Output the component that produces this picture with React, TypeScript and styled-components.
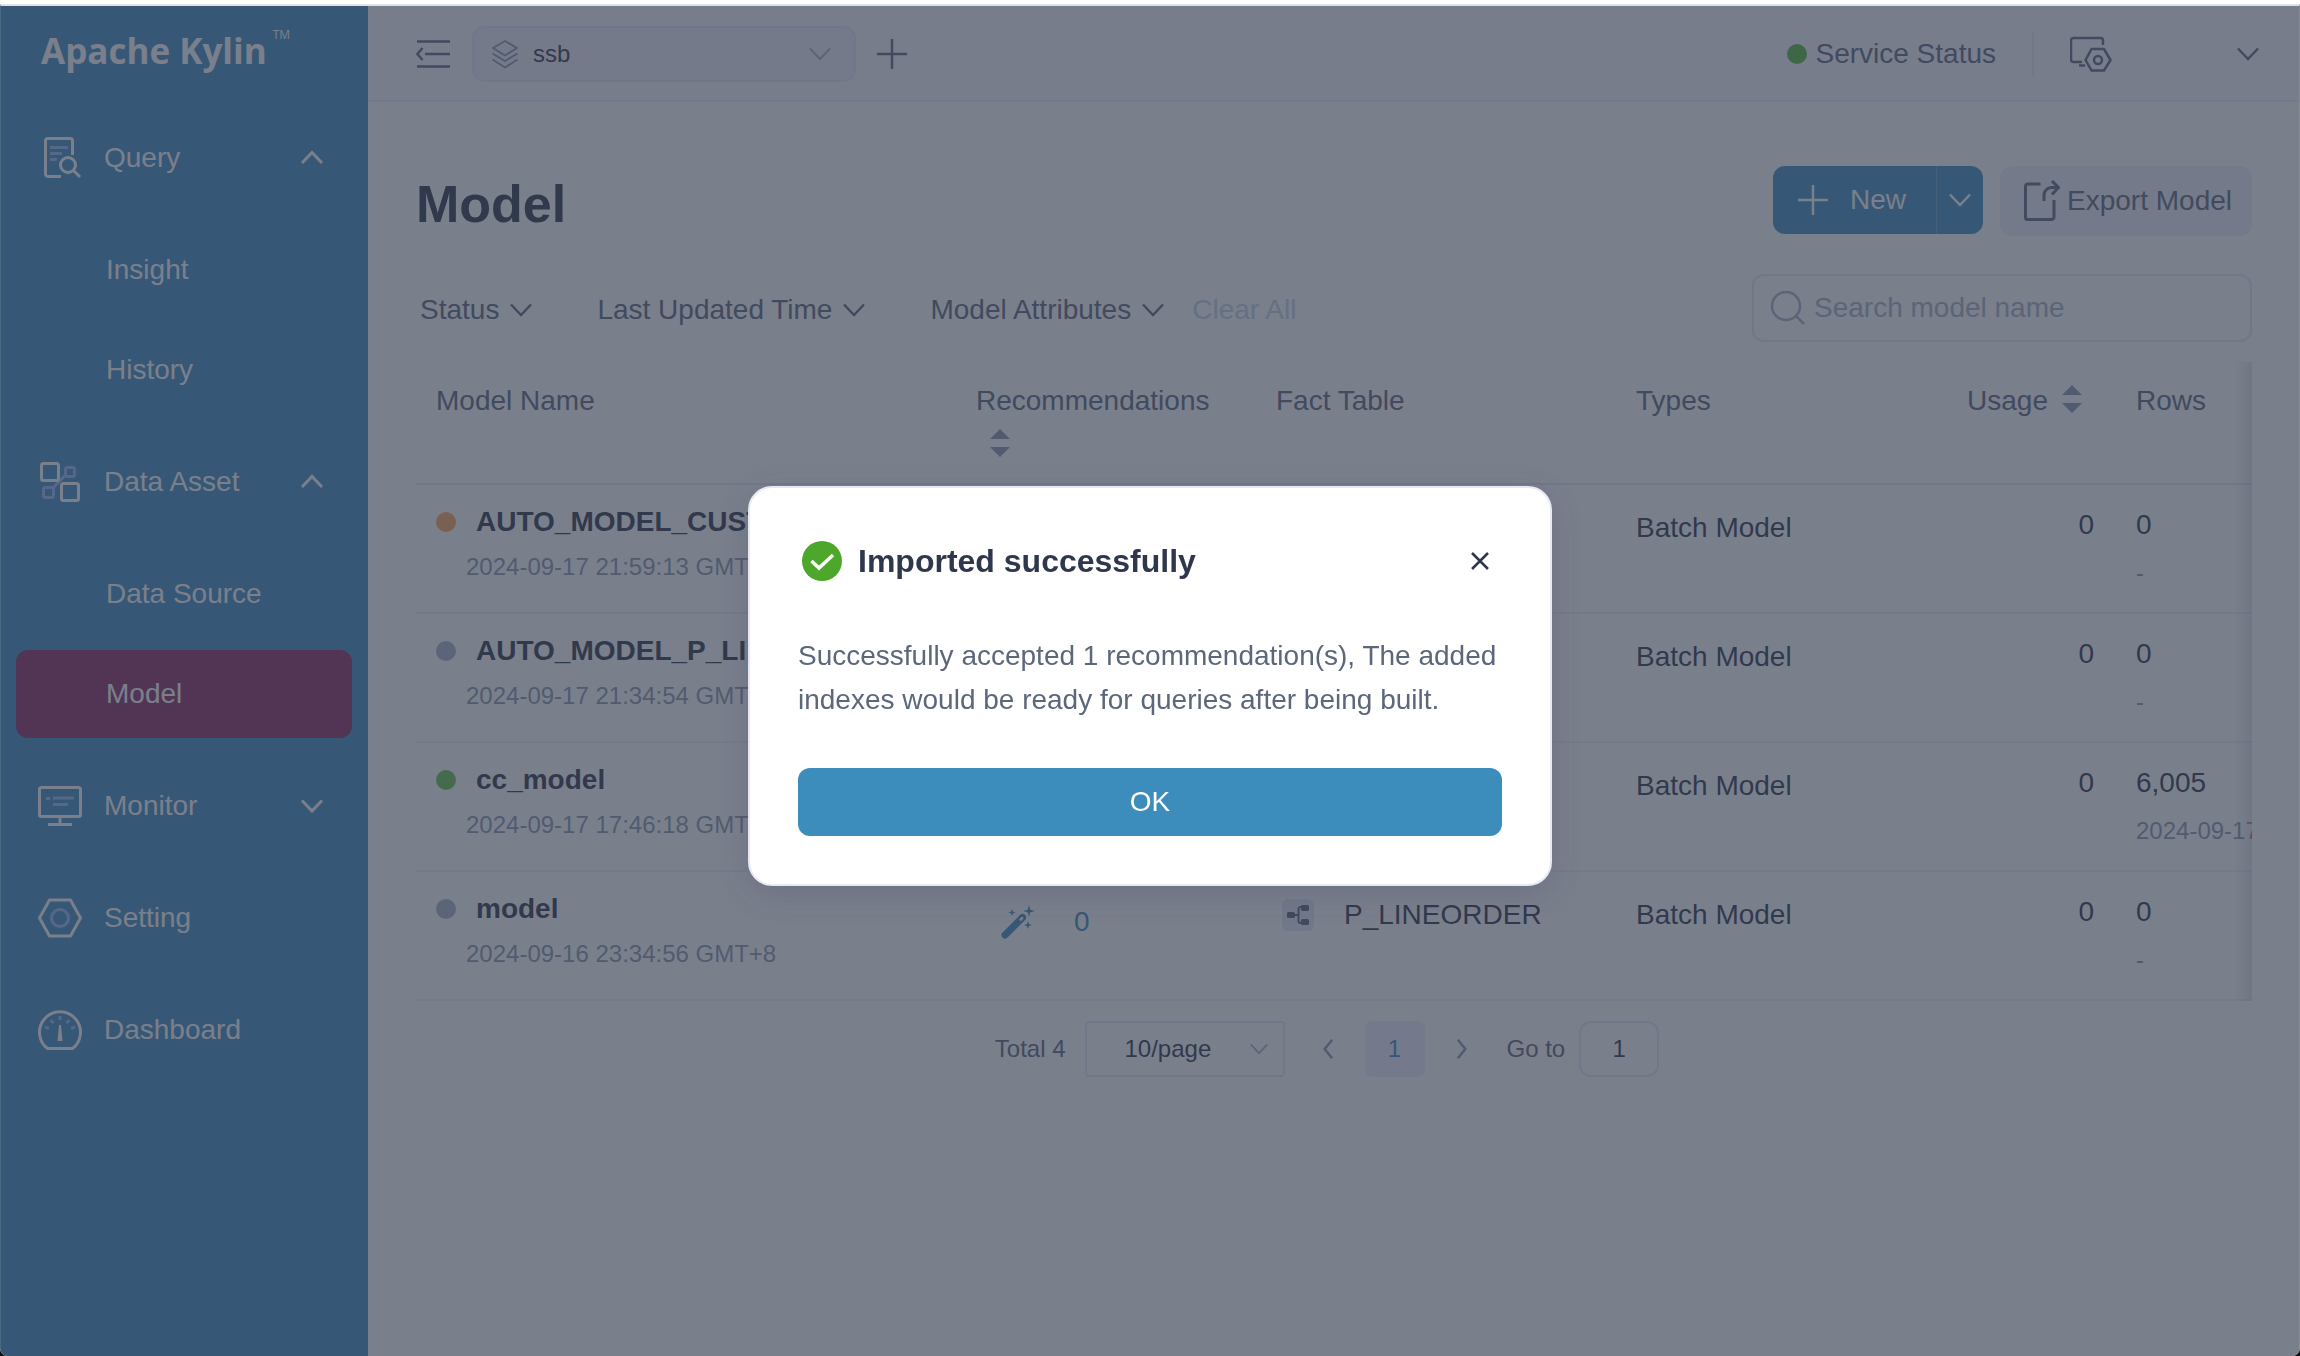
import React, { ReactNode } from 'react';
import styled, { createGlobalStyle } from 'styled-components';

const color = {
  brand: '#3c8dbc',
  active: '#8e2a5f',
  ink: '#2f374c',
  text: '#5c677b',
  muted: '#8b99ae',
  faint: '#a5b2c5',
  line: '#eff1f9',
  border: '#e6e9f7',
  soft: '#edf0f8',
};

const Global = createGlobalStyle`
  *, *::before, *::after { box-sizing: border-box; }
  html { background: #111; }
  body { margin: 0; font-family: "Liberation Sans", Arial, Helvetica, sans-serif; font-size: 28px; line-height: 32px; color: ${color.ink}; }
  button, input, select { font: inherit; color: inherit; margin: 0; padding: 0; border: 0; background: none; outline: 0; }
  button { cursor: pointer; display: inline-flex; align-items: center; }
  a { color: inherit; text-decoration: none; }
  h1, h2, p { margin: 0; }
  svg { display: block; flex: none; }
`;

/* ---------- icons ---------- */

const Svg = styled.svg.attrs({ fill: 'none', 'aria-hidden': true })<{ $c?: string }>`
  color: ${p => p.$c || 'inherit'};
  stroke: currentColor;
`;

const pale = '#94bcf5';

const Chevron = ({ dir = 'down', w = 24, sw = 3, c }: { dir?: string; w?: number; sw?: number; c?: string }) => {
  const d: Record<string, string> = {
    down: 'M2 6.5 12 17 22 6.5',
    up: 'M2 17 12 6.5 22 17',
    left: 'M17 1 8 12 17 23',
    right: 'M7 1 16 12 7 23',
  };
  return (
    <Svg $c={c} width={w} height={w} viewBox="0 0 24 24" strokeWidth={sw}>
      <path d={d[dir]} />
    </Svg>
  );
};

const QueryIcon = () => (
  <Svg width="44" height="44" viewBox="-2 0 44 44" strokeWidth="3">
    <path d="M21 40.500H8a2.500 2.500 0 0 1-2.500-2.500V4.500A2.500 2.500 0 0 1 8 2.500h22a2.500 2.500 0 0 1 2.500 2.500v14" />
    <path d="M10 11.500h18M10 17.500h12M10 23.500h7" stroke={pale} />
    <circle cx="28" cy="29" r="7.500" />
    <path d="m33.500 34.500 6.500 6.500" />
  </Svg>
);

const AssetIcon = () => (
  <Svg width="44" height="44" viewBox="0 0 44 44" strokeWidth="3">
    <g stroke={pale}>
      <rect x="27.500" y="7.500" width="9" height="9" rx="2" />
      <rect x="5.500" y="27.500" width="10" height="10" rx="2" />
      <path d="m15 28 12-12.500" />
    </g>
    <rect x="3.500" y="3.500" width="17" height="17" rx="2" />
    <rect x="23.500" y="23.500" width="17" height="17" rx="2" />
  </Svg>
);

const MonitorIcon = () => (
  <Svg width="44" height="44" viewBox="0 0 44 44" strokeWidth="3">
    <rect x="1.500" y="3.500" width="41" height="29" rx="2" />
    <path d="M22 33v6M10 40.500h24" />
    <path d="M8 14.500h4M15 14h21M15 20.500h15" stroke={pale} />
  </Svg>
);

const SettingIcon = () => (
  <Svg width="44" height="44" viewBox="0 0 44 44" strokeWidth="3">
    <path d="M11.500 4h21L42.500 22l-10 18h-21L1.500 22z" strokeLinejoin="round" />
    <circle cx="22" cy="22" r="8.500" stroke={pale} />
  </Svg>
);

const DashboardIcon = () => (
  <Svg width="44" height="44" viewBox="0 0 44 44" strokeWidth="3">
    <path d="M9.500 40.500a20.500 20.500 0 1 1 25 0z" strokeLinejoin="round" />
    <path d="M21 17h2l1.500 16h-5z" fill="currentColor" stroke="none" />
    <path d="M22 8v4M12.500 12l3 3M31.500 12l-3 3M7 19l4 1.500M37 19l-4 1.500" stroke={pale} />
  </Svg>
);

const CollapseIcon = () => (
  <Svg $c={color.text} width="34" height="30" viewBox="0 0 34 30" strokeWidth="2.500">
    <path d="M1 2.500h33M9 15h25M1 27.500h33M6.500 9 1.500 15l5 6" />
  </Svg>
);

const LayersIcon = () => (
  <Svg $c={color.muted} width="28" height="30" viewBox="0 0 28 30" strokeWidth="2" strokeLinejoin="round">
    <path d="M14 2 26 9 14 16.500 2 9zM1.500 14.500 14 22l12.500-7.500M1.500 20.500 14 28.500l12.500-8" />
  </Svg>
);

const PlusIcon = ({ c, sw = 2.5 }: { c?: string; sw?: number }) => (
  <Svg $c={c} width="32" height="32" viewBox="0 0 32 32" strokeWidth={sw}>
    <path d="M16 1v30M1 16h30" />
  </Svg>
);

const AdminIcon = () => (
  <Svg $c={color.text} width="42" height="36" viewBox="0 0 42 36" strokeWidth="2.500" strokeLinejoin="round">
    <path d="M33 9V4.500A2.500 2.500 0 0 0 30.500 2h-27A2.500 2.500 0 0 0 1 4.500v19A2.500 2.500 0 0 0 3.500 26H12M9 29.500h6" />
    <path d="M21.500 13h12.500l6.500 11-6.500 10.500H21.500L15.500 24z" />
    <circle cx="28" cy="24" r="4" />
  </Svg>
);

const ExportIcon = () => (
  <Svg $c={color.text} width="38" height="42" viewBox="0 0 38 42" strokeWidth="3" strokeLinejoin="round">
    <path d="M17.500 4H5a2.500 2.500 0 0 0-2.500 2.500v31A2 2 0 0 0 4.500 39.500h24a2.500 2.500 0 0 0 2.500-2.500V20" />
    <path d="M21 21v-6A7.500 7.500 0 0 1 28.500 7.500h7M29 1l6.500 6.500-6.500 7" />
  </Svg>
);

const SearchIcon = () => (
  <Svg $c={color.faint} width="36" height="36" viewBox="0 0 36 36" strokeWidth="2.500">
    <circle cx="16" cy="16" r="14" />
    <path d="m26 26 8 8" />
  </Svg>
);

const WandIcon = () => (
  <Svg $c={color.brand} width="36" height="36" viewBox="0 0 36 36">
    <g fill="currentColor" stroke="none">
      <path fillRule="evenodd" d="M2.500 28.500 20 11a3.500 3.500 0 0 1 5 5L7.500 33.500a3.500 3.500 0 0 1-5-5zM19 15.500l1.800 1.800 2.500-2.500a1.300 1.300 0 0 0-1.800-1.800z" />
      <path d="m29 1 1.200 4.800L35 7l-4.800 1.200L29 13l-1.200-4.800L23 7l4.800-1.200zM12 5l.9 2.600 2.600.9-2.600.9L12 12l-.9-2.600-2.600-.9 2.600-.9zM28 17l1 3 3 1-3 1-1 3-1-3-3-1 3-1z" />
    </g>
  </Svg>
);

const TreeIcon = () => (
  <Svg $c={color.text} width="24" height="24" viewBox="0 0 24 24" strokeWidth="2">
    <path d="M7 12h5M18 4h-3.500a2 2 0 0 0-2 2v12a2 2 0 0 0 2 2H18" />
    <g fill="currentColor" stroke="none">
      <rect x="1" y="9" width="8" height="6" rx="1.500" />
      <rect x="15" y="2" width="8" height="6" rx="1.500" />
      <rect x="15" y="16" width="8" height="6" rx="1.500" />
    </g>
  </Svg>
);

const SortIcon = () => (
  <Svg $c={color.muted} width="20" height="28" viewBox="0 0 20 28">
    <path d="M10 0 20 10H0zM0 18h20L10 28z" fill="currentColor" stroke="none" />
  </Svg>
);

const SuccessIcon = () => (
  <Svg width="40" height="40" viewBox="0 0 40 40">
    <circle cx="20" cy="20" r="20" fill="#4ca72a" stroke="none" />
    <path d="m9.500 20 7.500 7L31 14" stroke="#fff" strokeWidth="3.500" />
  </Svg>
);

const CloseIcon = () => (
  <Svg width="20" height="20" viewBox="0 0 20 20" strokeWidth="2.500">
    <path d="m2 2 16 16M18 2 2 18" />
  </Svg>
);

/* ---------- shell ---------- */

const Page = styled.div`
  display: flex;
  min-height: 100vh;
  border-top: 6px solid #fff;
  border-radius: 0 0 8px 8px;
  background: #fff;
  overflow: hidden;
`;

const Sidebar = styled.nav`
  flex: none;
  width: 368px;
  background: ${color.brand};
  color: #fff;
`;

const Brand = styled.a`
  display: flex;
  align-items: flex-start;
  gap: 6px;
  height: 96px;
  padding: 21px 0 0 41px;
  font-family: "Open Sans", "Noto Sans", sans-serif;
  font-size: 35px;
  line-height: 48px;
  font-weight: 700;
  sup { font-size: 12px; line-height: 16px; font-weight: 400; }
`;

const NavItem = styled.a`
  display: flex;
  align-items: center;
  gap: 22px;
  height: 112px;
  padding: 0 44px 0 38px;
  span { flex: 1; }
`;

const SubNav = styled.div`
  padding: 0 16px;
  margin: 6px 0;
`;

const SubItem = styled.a<{ $on?: boolean }>`
  display: flex;
  align-items: center;
  height: 88px;
  margin: 12px 0;
  padding-left: 90px;
  border-radius: 12px;
  background: ${p => (p.$on ? color.active : 'transparent')};
`;

const Main = styled.div`
  flex: 1;
  min-width: 0;
`;

const TopBar = styled.header`
  display: flex;
  align-items: center;
  height: 96px;
  padding: 2px 40px 0 48px;
  background: #f8f9ff;
  border-bottom: 2px solid ${color.line};
`;

const Project = styled.label`
  display: flex;
  align-items: center;
  gap: 14px;
  width: 384px;
  height: 56px;
  margin: 0 20px 0 22px;
  padding: 0 22px 0 17px;
  border: 2px solid ${color.border};
  border-radius: 12px;
  background: ${color.soft};
  font-size: 24px;
  select { flex: 1; appearance: none; }
`;

const Status = styled.a`
  display: flex;
  align-items: center;
  gap: 8px;
  margin-left: auto;
  color: ${color.text};
`;

const Dot = styled.i<{ $c: string }>`
  flex: none;
  width: 20px;
  height: 20px;
  border-radius: 50%;
  background: ${p => p.$c};
`;

const Divider = styled.i`
  width: 2px;
  height: 44px;
  margin: 0 36px;
  background: ${color.border};
`;

const AccountButton = styled.button`
  margin-left: 124px;
  color: ${color.text};
`;

const Content = styled.main`
  padding: 64px 48px 40px;
`;

const Row = styled.div`
  display: flex;
  align-items: center;
`;

const HeadRow = styled(Row)`
  align-items: flex-start;
  gap: 17px;
`;

const Title = styled.h1`
  flex: 1;
  padding-top: 8px;
  font-size: 52px;
  line-height: 60px;
`;

const NewGroup = styled.div`
  display: flex;
  height: 68px;
  border-radius: 12px;
  background: ${color.brand};
  color: #fff;
  overflow: hidden;
`;

const NewButton = styled.button`
  gap: 21px;
  width: 163px;
  padding-left: 24px;
`;

const NewMore = styled.button`
  justify-content: center;
  width: 47px;
  border-left: 1px solid #63a4c9;
`;

const ExportButton = styled.button`
  gap: 6px;
  height: 70px;
  padding: 0 20px 0 23px;
  border-radius: 12px;
  background: ${color.soft};
  color: ${color.text};
`;

const FilterRow = styled(Row)`
  margin-top: 38px;
`;

const Filter = styled.button`
  gap: 10px;
  margin: 4px 32px 0 0;
  padding: 0 0 0 4px;
  color: ${color.text};
  & + & { padding-left: 32px; }
  &:nth-of-type(3) { margin-right: 0; }
`;

const ClearAll = styled.button`
  margin: 4px auto 0 27px;
  color: #bfd4e6;
`;

const Search = styled.label`
  display: flex;
  align-items: center;
  gap: 8px;
  width: 500px;
  height: 68px;
  padding: 0 16px;
  border: 2px solid ${color.border};
  border-radius: 12px;
  input { flex: 1; min-width: 0; }
  input::placeholder { color: ${color.faint}; opacity: 1; }
`;

/* ---------- table ---------- */

const TableWrap = styled.div`
  position: relative;
  margin-top: 20px;
  overflow: hidden;
  &::after {
    content: '';
    position: absolute;
    inset: 0 0 0 auto;
    width: 18px;
    background: linear-gradient(to right, rgba(60, 70, 90, 0), rgba(60, 70, 90, 0.14));
  }
`;

const Table = styled.table`
  width: 100%;
  min-width: 2000px;
  table-layout: fixed;
  border-collapse: separate;
  border-spacing: 0;
`;

const Th = styled.th<{ $w: number; $end?: boolean }>`
  width: ${p => p.$w}px;
  height: 123px;
  padding: 23px 20px 0;
  border-bottom: 2px solid ${color.border};
  vertical-align: top;
  text-align: left;
  font-weight: 400;
  color: ${color.text};
`;

const ThInner = styled.div<{ $end?: boolean }>`
  display: flex;
  flex-wrap: ${p => (p.$end ? 'nowrap' : 'wrap')};
  justify-content: ${p => (p.$end ? 'flex-end' : 'flex-start')};
  row-gap: 12px;
`;

const SortButton = styled.button`
  height: 28px;
  margin: 0 14px;
`;

const Td = styled.td<{ $top: number; $end?: boolean }>`
  height: 129px;
  padding: ${p => p.$top}px ${p => (p.$end ? 22 : 20)}px 0 20px;
  border-bottom: 2px solid ${color.line};
  vertical-align: top;
  text-align: ${p => (p.$end ? 'right' : 'left')};
  white-space: nowrap;
`;

const ModelName = styled.div`
  display: flex;
  align-items: center;
  gap: 20px;
  font-weight: 700;
`;

const Stamp = styled.div<{ $in?: boolean }>`
  margin-top: ${p => (p.$in ? 13 : 16)}px;
  padding-left: ${p => (p.$in ? 30 : 0)}px;
  font-size: 24px;
  color: ${color.muted};
`;

const Advice = styled.a`
  display: flex;
  align-items: center;
  gap: 38px;
  padding-left: 24px;
  color: ${color.brand};
`;

const Fact = styled.div`
  display: flex;
  align-items: center;
  gap: 30px;
  padding-left: 6px;
`;

const FactBadge = styled.span`
  display: flex;
  align-items: center;
  justify-content: center;
  width: 32px;
  height: 32px;
  border-radius: 6px;
  background: #e6eaf5;
`;

/* ---------- pagination ---------- */

const Pager = styled(Row)`
  justify-content: center;
  margin-top: 20px;
  padding-right: 14px;
  font-size: 24px;
  color: ${color.text};
`;

const PageSize = styled.label`
  display: flex;
  align-items: center;
  width: 200px;
  height: 56px;
  margin: 0 33px 0 19px;
  padding: 0 14px 0 38px;
  border: 2px solid ${color.border};
  border-radius: 4px;
  color: ${color.ink};
  select { flex: 1; min-width: 0; appearance: none; }
`;

const PageButton = styled.button`
  justify-content: center;
  width: 60px;
  height: 56px;
  margin: 0 27px;
  border-radius: 8px;
  background: #eeeffc;
  color: ${color.brand};
`;

const GoTo = styled.label`
  display: flex;
  align-items: center;
  gap: 14px;
  margin-left: 35px;
  input {
    width: 80px;
    height: 56px;
    border: 2px solid ${color.border};
    border-radius: 12px;
    text-align: center;
    color: ${color.ink};
  }
`;

/* ---------- dialog ---------- */

const Mask = styled.div`
  position: fixed;
  inset: 4px 0 0;
  display: flex;
  align-items: center;
  justify-content: center;
  padding-top: 10px;
  border: 1px solid rgba(255, 255, 255, 0.1);
  border-top: 2px solid #dfe3e4;
  border-bottom: 0;
  border-radius: 0 0 8px 8px;
  background: rgba(50, 58, 78, 0.65);
`;

const Dialog = styled.section`
  width: 804px;
  padding: 48px;
  border: 2px solid #e6e9f5;
  border-radius: 24px;
  background: #fff;
  box-shadow: 0 8px 30px rgba(50, 58, 78, 0.2);
`;

const DialogHead = styled(Row)`
  gap: 16px;
  padding: 0 12px 0 4px;
  height: 50px;
  h2 { flex: 1; font-size: 32px; line-height: 40px; }
`;

const DialogText = styled.p`
  margin: 48px 0 46px;
  line-height: 44px;
  color: ${color.text};
`;

const OkButton = styled.button`
  justify-content: center;
  width: 100%;
  height: 68px;
  border-radius: 12px;
  background: ${color.brand};
  color: #fff;
`;

/* ---------- data ---------- */

type Model = { name: string; time: string; dot: string; advice: number; fact: string; rows: string; range: string };

const models: Model[] = [
  { name: 'AUTO_MODEL_CUSTOMER', time: '2024-09-17 21:59:13 GMT+8', dot: '#ffa657', advice: 0, fact: 'CUSTOMER', rows: '0', range: '-' },
  { name: 'AUTO_MODEL_P_LINEORDER', time: '2024-09-17 21:34:54 GMT+8', dot: color.faint, advice: 0, fact: 'P_LINEORDER', rows: '0', range: '-' },
  { name: 'cc_model', time: '2024-09-17 17:46:18 GMT+8', dot: '#62c649', advice: 0, fact: 'P_LINEORDER', rows: '6,005', range: '2024-09-17' },
  { name: 'model', time: '2024-09-16 23:34:56 GMT+8', dot: color.faint, advice: 0, fact: 'P_LINEORDER', rows: '0', range: '-' },
];

type Group = { label: string; icon: ReactNode; arrow?: string; children?: string[] };

const nav: Group[] = [
  { label: 'Query', icon: <QueryIcon />, arrow: 'up', children: ['Insight', 'History'] },
  { label: 'Data Asset', icon: <AssetIcon />, arrow: 'up', children: ['Data Source', 'Model'] },
  { label: 'Monitor', icon: <MonitorIcon />, arrow: 'down' },
  { label: 'Setting', icon: <SettingIcon /> },
  { label: 'Dashboard', icon: <DashboardIcon /> },
];

export default function App() {
  return (
    <>
      <Global />
      <Page>
        <Sidebar>
          <Brand href="#">Apache Kylin<sup>TM</sup></Brand>
          {nav.map(g => (
            <React.Fragment key={g.label}>
              <NavItem href="#">
                {g.icon}
                <span>{g.label}</span>
                {g.arrow && <Chevron dir={g.arrow} />}
              </NavItem>
              {g.children && (
                <SubNav>
                  {g.children.map(c => (
                    <SubItem key={c} href="#" $on={c === 'Model'}>{c}</SubItem>
                  ))}
                </SubNav>
              )}
            </React.Fragment>
          ))}
        </Sidebar>

        <Main>
          <TopBar>
            <button aria-label="Collapse menu"><CollapseIcon /></button>
            <Project>
              <LayersIcon />
              <select aria-label="Project"><option>ssb</option></select>
              <Chevron sw={2} c={color.faint} />
            </Project>
            <button aria-label="Add project"><PlusIcon c={color.text} /></button>
            <Status href="#"><Dot $c="#54b93a" />Service Status</Status>
            <Divider />
            <button aria-label="System admin"><AdminIcon /></button>
            <AccountButton aria-label="Account"><Chevron sw={2.5} /></AccountButton>
          </TopBar>

          <Content>
            <HeadRow>
              <Title>Model</Title>
              <NewGroup>
                <NewButton><PlusIcon />New</NewButton>
                <NewMore aria-label="More"><Chevron sw={2.5} /></NewMore>
              </NewGroup>
              <ExportButton><ExportIcon />Export Model</ExportButton>
            </HeadRow>

            <FilterRow>
              <Filter>Status<Chevron sw={2.5} /></Filter>
              <Filter>Last Updated Time<Chevron sw={2.5} /></Filter>
              <Filter>Model Attributes<Chevron sw={2.5} /></Filter>
              <ClearAll>Clear All</ClearAll>
              <Search>
                <SearchIcon />
                <input aria-label="Search model name" placeholder="Search model name" />
              </Search>
            </FilterRow>

            <TableWrap>
              <Table>
                <thead>
                  <tr>
                    <Th $w={540}>Model Name</Th>
                    <Th $w={300}>
                      <ThInner>Recommendations<SortButton aria-label="Sort by recommendations"><SortIcon /></SortButton></ThInner>
                    </Th>
                    <Th $w={360}>Fact Table</Th>
                    <Th $w={300}>Types</Th>
                    <Th $w={200}>
                      <ThInner $end>Usage<SortButton aria-label="Sort by usage"><SortIcon /></SortButton></ThInner>
                    </Th>
                    <Th $w={300}>Rows</Th>
                  </tr>
                </thead>
                <tbody>
                  {models.map(m => (
                    <tr key={m.name}>
                      <Td $top={21}>
                        <ModelName><Dot $c={m.dot} />{m.name}</ModelName>
                        <Stamp $in>{m.time}</Stamp>
                      </Td>
                      <Td $top={32}><Advice href="#"><WandIcon />{m.advice}</Advice></Td>
                      <Td $top={27}><Fact><FactBadge><TreeIcon /></FactBadge>{m.fact}</Fact></Td>
                      <Td $top={27}>Batch Model</Td>
                      <Td $top={24} $end>0</Td>
                      <Td $top={24}>{m.rows}<Stamp>{m.range}</Stamp></Td>
                    </tr>
                  ))}
                </tbody>
              </Table>
            </TableWrap>

            <Pager>
              Total 4
              <PageSize>
                <select aria-label="Page size"><option>10/page</option></select>
                <Chevron w={20} sw={2} c={color.faint} />
              </PageSize>
              <button aria-label="Previous page"><Chevron dir="left" w={20} sw={3} c={color.muted} /></button>
              <PageButton>1</PageButton>
              <button aria-label="Next page"><Chevron dir="right" w={20} sw={3} c={color.muted} /></button>
              <GoTo>Go to<input defaultValue="1" /></GoTo>
            </Pager>
          </Content>
        </Main>
      </Page>

      <Mask>
        <Dialog role="dialog" aria-labelledby="dialog-title">
          <DialogHead>
            <SuccessIcon />
            <h2 id="dialog-title">Imported successfully</h2>
            <button aria-label="Close"><CloseIcon /></button>
          </DialogHead>
          <DialogText>
            Successfully accepted 1 recommendation(s), The added indexes would be ready for queries after being built.
          </DialogText>
          <OkButton>OK</OkButton>
        </Dialog>
      </Mask>
    </>
  );
}
